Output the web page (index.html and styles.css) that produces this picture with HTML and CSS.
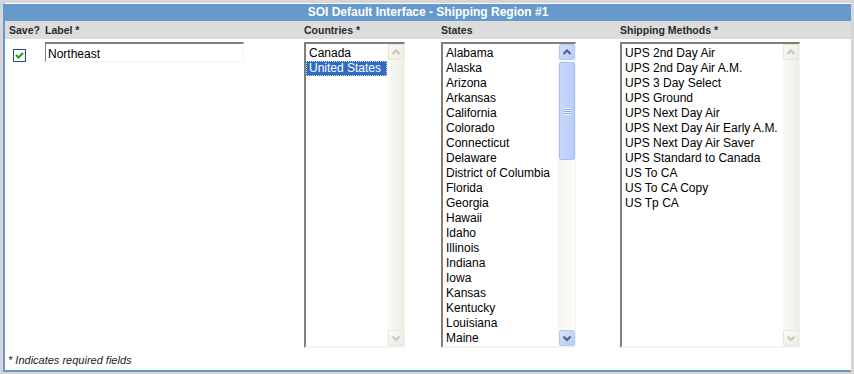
FILE: index.html
```html
<!DOCTYPE html>
<html lang="en">
<head>
    <meta charset="UTF-8" />
    <title>SOI Default Interface - Shipping Region #1</title>
    <link rel="stylesheet" href="styles.css">
</head>
<body>
    <div class="panel">
        <div class="title">SOI Default Interface - Shipping Region #1</div>

        <div class="cols head">
            <div>Save?</div>
            <div>Label *</div>
            <div>Countries *</div>
            <div>States</div>
            <div>Shipping Methods *</div>
        </div>

        <div class="cols row">
            <div>
                <span class="check">
                    <svg width="11" height="11" viewBox="0 0 11 11"><polyline points="2,5 4.5,7.5 9,3" fill="none" stroke="#21a121" stroke-width="2.2"/></svg>
                </span>
            </div>
            <div><div class="textbox">Northeast</div></div>

            <div>
                <div class="listbox countries">
                    <div class="items">
                        <div>Canada</div>
                        <div class="selected">United States</div>
                    </div>
                    <div class="scroll off">
                        <div class="btn"><svg width="14" height="14" viewBox="0 0 14 14"><polyline points="3.5,9 7,5.5 10.5,9" fill="none" stroke-width="2"/></svg></div>
                        <div class="track"></div>
                        <div class="btn"><svg width="14" height="14" viewBox="0 0 14 14"><polyline points="3.5,5.5 7,9 10.5,5.5" fill="none" stroke-width="2"/></svg></div>
                    </div>
                </div>
            </div>

            <div>
                <div class="listbox states">
                    <div class="items">
                        <div>Alabama</div>
                        <div>Alaska</div>
                        <div>Arizona</div>
                        <div>Arkansas</div>
                        <div>California</div>
                        <div>Colorado</div>
                        <div>Connecticut</div>
                        <div>Delaware</div>
                        <div>District of Columbia</div>
                        <div>Florida</div>
                        <div>Georgia</div>
                        <div>Hawaii</div>
                        <div>Idaho</div>
                        <div>Illinois</div>
                        <div>Indiana</div>
                        <div>Iowa</div>
                        <div>Kansas</div>
                        <div>Kentucky</div>
                        <div>Louisiana</div>
                        <div>Maine</div>
                    </div>
                    <div class="scroll on">
                        <div class="btn"><svg width="14" height="14" viewBox="0 0 14 14"><polyline points="3.5,9 7,5.5 10.5,9" fill="none" stroke-width="2"/></svg></div>
                        <div class="track">
                            <div class="thumb"><span class="grip"></span></div>
                        </div>
                        <div class="btn"><svg width="14" height="14" viewBox="0 0 14 14"><polyline points="3.5,5.5 7,9 10.5,5.5" fill="none" stroke-width="2"/></svg></div>
                    </div>
                </div>
            </div>

            <div>
                <div class="listbox methods">
                    <div class="items">
                        <div>UPS 2nd Day Air</div>
                        <div>UPS 2nd Day Air A.M.</div>
                        <div>UPS 3 Day Select</div>
                        <div>UPS Ground</div>
                        <div>UPS Next Day Air</div>
                        <div>UPS Next Day Air Early A.M.</div>
                        <div>UPS Next Day Air Saver</div>
                        <div>UPS Standard to Canada</div>
                        <div>US To CA</div>
                        <div>US To CA Copy</div>
                        <div>US Tp CA</div>
                    </div>
                    <div class="scroll off">
                        <div class="btn"><svg width="14" height="14" viewBox="0 0 14 14"><polyline points="3.5,9 7,5.5 10.5,9" fill="none" stroke-width="2"/></svg></div>
                        <div class="track"></div>
                        <div class="btn"><svg width="14" height="14" viewBox="0 0 14 14"><polyline points="3.5,5.5 7,9 10.5,5.5" fill="none" stroke-width="2"/></svg></div>
                    </div>
                </div>
            </div>
        </div>

        <div class="note">* Indicates required fields</div>
    </div>
</body>
</html>
```

FILE: styles.css
```css
body {
    margin: 0;
    background-color: #d6d6d6;
    font-family: "Liberation Sans", Arial, sans-serif;
    color: #000;
}

.panel {
    margin: 3px 3px 0 3px;
    background-color: #fff;
    border-top: 1px solid #fff;
    border-left: 2px solid #6699cc;
    border-bottom: 2px solid #6699cc;
}

.title {
    height: 17px;
    line-height: 17px;
    background-color: #6699cc;
    color: #fff;
    font-weight: bold;
    font-size: 12px;
    text-align: center;
}

.cols {
    display: grid;
    grid-template-columns: 36px 259px 137px 179px 1fr;
    padding-left: 4px;
}

.head {
    height: 18px;
    line-height: 18px;
    background-color: #dcdcdc;
    font-weight: bold;
    font-size: 10.5px;
    color: #2a2a2a;
}

.row {
    margin-top: 3px;
}

.check {
    display: flex;
    justify-content: center;
    align-items: center;
    box-sizing: border-box;
    width: 13px;
    height: 13px;
    margin: 7px 0 0 4px;
    border: 1px solid #1c5180;
    background-color: #fff;
}

.textbox {
    box-sizing: border-box;
    width: 199px;
    height: 20px;
    padding: 3px 0 0 2px;
    border-top: 2px solid #808078;
    border-left: 1px solid #808078;
    border-right: 1px solid #f4f3ee;
    border-bottom: 1px solid #f4f3ee;
    font-size: 12px;
    line-height: 15px;
}

.listbox {
    display: flex;
    box-sizing: border-box;
    height: 306px;
    border-top: 2px solid #808078;
    border-left: 2px solid #808078;
    border-right: 1px solid #f4f3ee;
    border-bottom: 2px solid #f4f3ee;
}

.countries { width: 101px; }
.states { width: 135px; }
.methods { width: 180px; }

.items {
    flex: 1;
    overflow: hidden;
    padding-top: 2px;
    font-size: 12px;
    line-height: 15px;
    white-space: nowrap;
}

.items div {
    padding-left: 3px;
}

.items .selected {
    background-color: #316ac5;
    color: #fff;
    outline: 1px dotted #c9d8f0;
    outline-offset: -1px;
}

.scroll {
    display: flex;
    flex-direction: column;
    width: 17px;
    background: linear-gradient(to right, #fbfbf9, #eeede5);
}

.scroll .btn {
    display: flex;
    justify-content: center;
    align-items: center;
    box-sizing: border-box;
    width: 16px;
    height: 16px;
    margin-left: 1px;
    border-radius: 2px;
}

.scroll .track {
    flex: 1;
}

.off .btn {
    border: 1px solid #e8e6dc;
    background: linear-gradient(to bottom right, #fafaf7, #ecebe3);
}

.off .btn polyline {
    stroke: #c9c7ba;
}

.on {
    background: linear-gradient(to right, #f6f5f0, #fdfdfb);
}

.on .btn {
    border: 1px solid #b4c8f6;
    background: linear-gradient(to bottom right, #d6e2fd, #b6cbf9);
}

.on .btn polyline {
    stroke: #4d6185;
}

.thumb {
    display: flex;
    justify-content: center;
    align-items: center;
    box-sizing: border-box;
    width: 16px;
    height: 98px;
    margin: 2px 0 0 1px;
    border: 1px solid #a7bff3;
    border-radius: 2px;
    background: linear-gradient(to right, #c8d8fd, #b9cdfb);
}

.grip {
    width: 7px;
    height: 7px;
    background: repeating-linear-gradient(to bottom, #eef3fe 0, #eef3fe 1px, #8fa9e6 1px, #8fa9e6 2px);
}

.note {
    height: 22px;
    padding: 5px 0 0 3px;
    box-sizing: border-box;
    font-style: italic;
    font-size: 11px;
    line-height: 14px;
    color: #222;
}
```
